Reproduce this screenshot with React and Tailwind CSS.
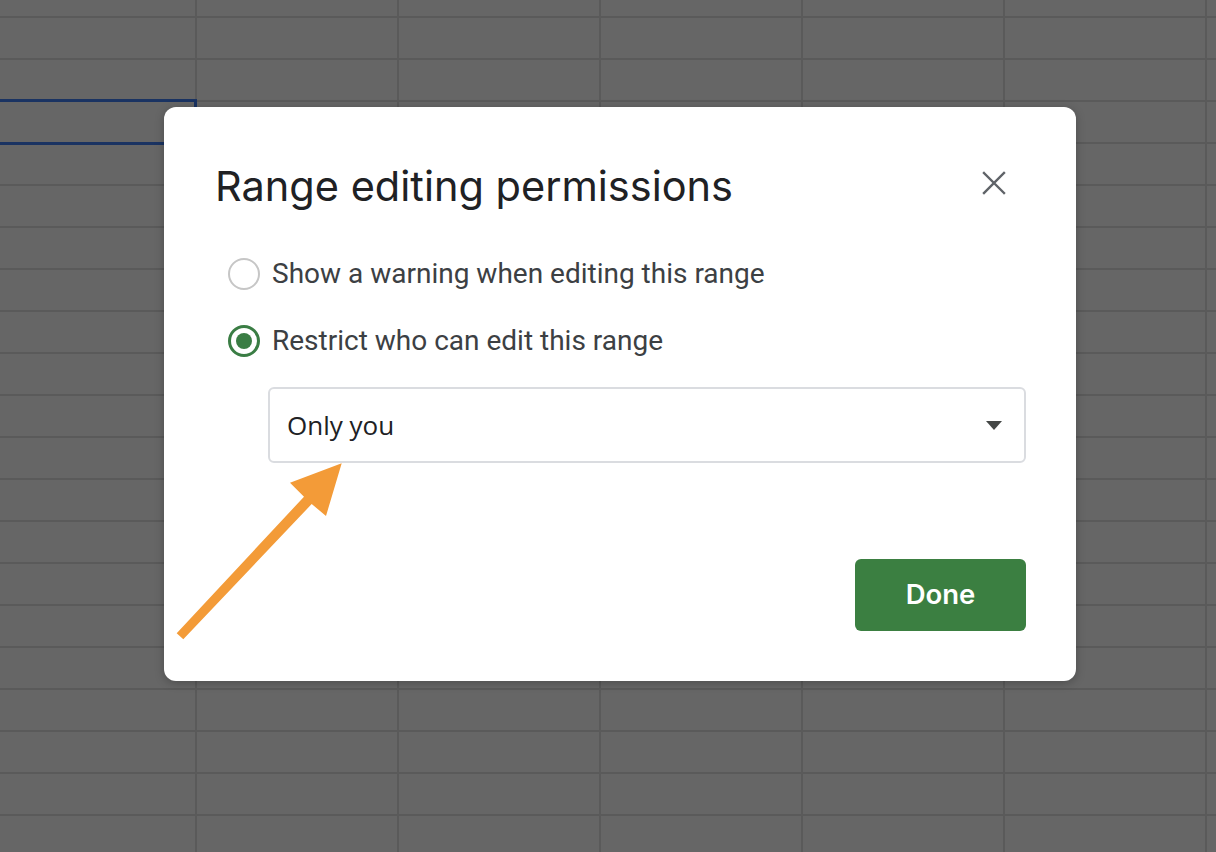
export default function App() {
  const rows = Array.from({ length: 22 });
  const cols = Array.from({ length: 7 });

  return (
    <div className="relative w-[1216px] h-[852px] overflow-hidden bg-[#666666]" style={{ fontFamily: 'Roboto, "Liberation Sans", sans-serif' }}>
      {/* Spreadsheet grid behind the overlay */}
      <div className="flex flex-col mt-[-24px] ml-[-5px]">
        {rows.map((_, r) => (
          <div key={r} className="flex">
            {cols.map((_, c) => (
              <div key={c} className="relative w-[202px] h-[42px] shrink-0 border-r-2 border-b-2 border-[#5a5a5a]">
                {r === 3 && c === 0 && (
                  <div className="absolute top-[-3px] bottom-[-3px] left-0 right-[-2px] border-[3px] border-[#1a3362]"></div>
                )}
              </div>
            ))}
          </div>
        ))}
      </div>

      {/* Dialog */}
      <div className="absolute left-[164px] top-[107px] w-[912px] h-[574px] bg-white rounded-[12px] shadow-[0_2px_10px_rgba(0,0,0,0.25)] flex flex-col pl-[51px] pr-[50px]">
        <button className="absolute top-[64px] right-[70px] w-6 h-6 flex items-center justify-center">
          <svg width="24" height="24" viewBox="0 0 24 24">
            <path d="M2 2 L22 22 M22 2 L2 22" stroke="#5f6368" strokeWidth="2.4" strokeLinecap="square" />
          </svg>
        </button>

        <h1 className="mt-[55px] h-[48px] leading-[48px] text-[41.5px] text-[#202124]" style={{ fontFamily: 'Inter, "Open Sans", sans-serif' }}>
          Range editing permissions
        </h1>

        <label className="mt-[44px] ml-[13px] h-[40px] flex items-center gap-3">
          <span className="w-8 h-8 rounded-full border-2 border-[#c6c6c6] shrink-0"></span>
          <span className="text-[28px] text-[#3c4043]">Show a warning when editing this range</span>
        </label>

        <label className="mt-[27px] ml-[13px] h-[40px] flex items-center gap-3">
          <span className="w-8 h-8 rounded-full border-[3px] border-[#3a7d44] shrink-0 flex items-center justify-center">
            <span className="w-4 h-4 rounded-full bg-[#3a7d44]"></span>
          </span>
          <span className="text-[28px] text-[#3c4043]">Restrict who can edit this range</span>
        </label>

        <div className="mt-[26px] ml-[53px] h-[76px] border-2 border-[#dadce0] rounded-[6px] flex items-center justify-between pl-[17px] pr-[22px]">
          <span className="text-[26px] text-[#202124]" style={{ fontFamily: '"Open Sans", sans-serif' }}>Only you</span>
          <svg width="16" height="9" viewBox="0 0 16 9">
            <path d="M0 0 L16 0 L8 9 Z" fill="#444746" />
          </svg>
        </div>

        <div className="mt-[96px] flex justify-end">
          <button className="w-[171px] h-[72px] rounded-[6px] bg-[#3b7f41] text-white text-[27.5px] font-semibold" style={{ fontFamily: 'Inter, "Open Sans", sans-serif' }}>
            Done
          </button>
        </div>
      </div>

      {/* Callout arrow */}
      <svg className="absolute left-0 top-0 pointer-events-none" width="1216" height="852" viewBox="0 0 1216 852">
        <polygon
          points="176.7,633.3 183.3,639.3 311.7,504 326,516 341.7,463.3 290,482.7 304,496.7"
          fill="#f39b38"
        />
      </svg>
    </div>
  );
}
